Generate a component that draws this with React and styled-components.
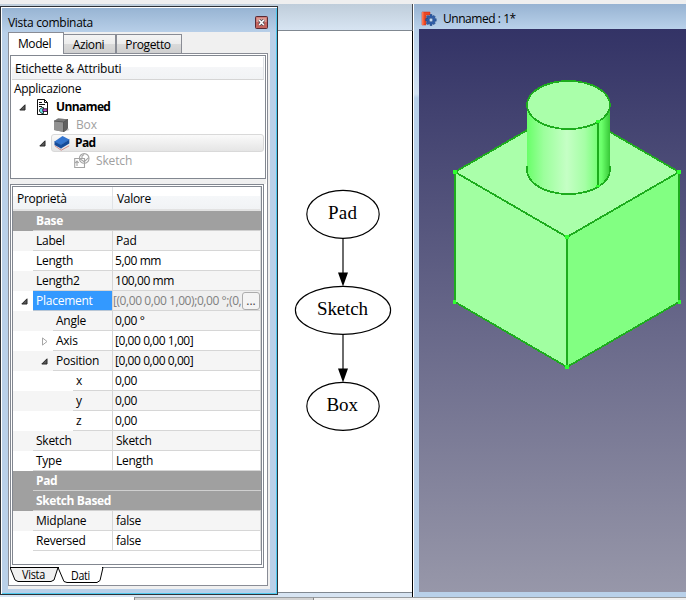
import React from "react";
import styled, { createGlobalStyle, css } from "styled-components";

const Global = createGlobalStyle`
  * { box-sizing: border-box; }
  body { margin: 0; overflow: hidden; }
`;

const Screen = styled.div`
  width: 686px;
  height: 600px;
  display: grid;
  grid-template-rows: 4px 593px 3px;
  background: #efefef;
  color: #000;
  font: 12px/18px "Open Sans", "Noto Sans", sans-serif;
  letter-spacing: -0.3px;
  white-space: nowrap;
  overflow: hidden;
`;

const TopEdge = styled.div`
  background: #efefef;
`;

const Workspace = styled.div`
  display: grid;
  grid-template-columns: 278px 136px 272px;
  background: #d7e4f2;
`;

const DockColumn = styled.div`
  padding-top: 2px;
  background: linear-gradient(#bfcdda, #c3d1de 2px, #d7e4f2 3px);
`;

const Dock = styled.section`
  height: 589px;
  padding: 0 7px 5px 6px;
  display: flex;
  flex-direction: column;
  border: 1px solid #2e3237;
  background: linear-gradient(#96b3d2, #b9d0e9 26px, #b9d0e9);
  box-shadow: inset 1px 1px #fff, inset -1px -1px #4ec9ef;
`;

const DockTitle = styled.header`
  height: 25px;
  padding: 6px 2px 0 1px;
  display: flex;
  justify-content: space-between;
  line-height: 20px;
`;

const CloseIcon = styled.svg`
  width: 13px;
  height: 13px;
  margin-top: 3px;
`;

const DockBody = styled.div`
  flex: 1;
  width: 262px;
  margin-left: 1px;
  background: #f0f0f0;
`;

const TabRow = styled.div`
  height: 21px;
  display: flex;
  align-items: flex-end;
`;

const Tab = styled.div`
  width: ${(p) => p.$width}px;
  height: ${(p) => (p.$active ? 22 : 19)}px;
  margin-bottom: ${(p) => (p.$active ? -1 : 0)}px;
  border: 1px solid #898c95;
  border-bottom: 0;
  margin-right: ${(p) => (p.$active ? -1 : 0)}px;
  padding-right: ${(p) => (p.$active ? 3 : 2)}px;
  text-align: center;
  line-height: ${(p) => (p.$active ? 21 : 19)}px;
  background: ${(p) => (p.$active ? "#fff" : "linear-gradient(#f4f4f4, #ececec 50%, #dadada 51%, #cfcfcf)")};
  z-index: ${(p) => (p.$active ? 1 : 0)};
  letter-spacing: -0.38px;
`;

const TabPage = styled.div`
  width: 260px;
  height: 533px;
  padding: 1px;
  border: 1px solid #898c95;
  background: #fff;
`;

const TreeFrame = styled.div`
  width: 256px;
  height: 124px;
  padding: 1px;
  border: 1px solid #828790;
  background: #fff;
`;

const TreeHeader = styled.div`
  height: 23px;
  padding-left: 3px;
  line-height: 23px;
  letter-spacing: -0.18px;
  border-bottom: 1px solid #d5d5d5;
  border-right: 1px solid #dfe2e6;
  background: linear-gradient(#fff 45%, #f5f6f8 46%, #f1f3f5);
`;

const TreeRow = styled.div`
  height: 18px;
  padding-left: ${(p) => p.$indent}px;
  display: flex;
  align-items: center;
  font-weight: ${(p) => (p.$bold ? 700 : 400)};
  letter-spacing: ${(p) => (p.$bold ? -0.6 : p.$muted ? -0.15 : -0.3)}px;
  color: ${(p) => (p.$muted ? "#a0a0a0" : "#000")};
`;

const TreeLabel = styled.div`
  height: 18px;
  display: flex;
  align-items: center;
  gap: ${(p) => (p.$tight ? 4 : 6)}px;
  flex: 1;
  padding-left: ${(p) => (p.$selected ? 2 : 3)}px;
  ${(p) =>
    p.$selected &&
    css`
      border: 1px solid #d9d9d9;
      border-radius: 3px;
      gap: 5px;
      background: linear-gradient(#fafafa, #e5e5e5);
    `}
`;

const Branch = styled.svg`
  width: ${(p) => p.$width ?? 7}px;
  height: ${(p) => p.$height ?? 7}px;
  flex: none;
  margin-right: ${(p) => p.$gap}px;
`;

const Icon = styled.svg`
  width: 16px;
  height: 16px;
  flex: none;
`;

const Splitter = styled.div`
  width: 256px;
  height: 5px;
  background: #f0f0f0;
`;

const PropertyFrame = styled.div`
  width: 254px;
  height: 384px;
  padding: 1px;
  border: 1px solid #828790;
  background: #fff;
`;

const PropertyView = styled.div`
  width: 250px;
  height: 379px;
  border: 1px solid #828790;
`;

const PropertyHeader = styled.div`
  width: 248px;
  height: 24px;
  display: grid;
  grid-template-columns: 100px 1fr;
  line-height: 24px;
  letter-spacing: -0.3px;
  border-bottom: 2px solid #e2e2e2;
  background: linear-gradient(#fff 42%, #f5f7f9 43%, #f1f3f5);
`;

const HeaderCell = styled.div`
  padding-left: 4px;
  border-right: 1px solid #e0e3e6;
`;

const PropertyRow = styled.div`
  width: 248px;
  height: 20px;
  display: grid;
  grid-template-columns: ${(p) => p.$indent}px ${(p) => 99 - p.$indent}px 1fr;
  background: ${(p) => (p.$shade ? "#f5f5f5" : "#fff")};
`;

const BranchCell = styled.div`
  padding-right: 5px;
  display: flex;
  align-items: center;
  justify-content: flex-end;
`;

const NameCell = styled.div`
  padding-left: 3px;
  line-height: 19px;
  letter-spacing: -0.25px;
  border-bottom: 1px solid #d6d6d6;
  ${(p) =>
    p.$selected &&
    css`
      background: #3399ff;
      border-color: #b9c7d6;
      color: #fff;
    `}
`;

const ValueCell = styled.div`
  display: flex;
  padding-left: ${(p) => (p.$editing ? 0 : p.$numeric ? 2 : 3)}px;
  line-height: 19px;
  border: solid #d6d6d6;
  border-width: 0 1px 1px;
  letter-spacing: ${(p) => (p.$numeric ? -0.43 : -0.25)}px;
  color: ${(p) => (p.$editing ? "#808080" : "#000")};
  background: ${(p) => (p.$editing ? "#efefef" : "transparent")};
`;

const EditedValue = styled.span`
  flex: 1;
  letter-spacing: -0.42px;
`;

const MoreButton = styled.button`
  width: 18px;
  height: 18px;
  padding: 0;
  flex: none;
  margin-top: 1px;
  border: 1px solid #acacac;
  border-radius: 3px;
  background: #f4f4f4;
  color: #444;
  font: 12px/12px "Open Sans", sans-serif;
`;

const GroupRow = styled.div`
  width: 248px;
  height: 20px;
  padding-left: 20px;
  background: #a0a0a0;
  color: #fff;
  font-weight: 700;
  letter-spacing: -0.38px;
`;

const GroupName = styled.div`
  height: 20px;
  padding-left: 3px;
  line-height: 19px;
  border-bottom: 1px solid #d0d0d0;
`;

const BottomTabs = styled.svg`
  display: block;
  width: 100px;
  height: 16px;
  margin-top: -1px;
  font: 12px "Open Sans", sans-serif;
`;

const GraphPane = styled.section`
  display: flex;
  flex-direction: column;
  border-right: 1px solid #fff;
`;

const GraphTitle = styled.div`
  height: 27px;
  background: linear-gradient(#bfcdda, #d7e4f2);
  border-right: 1px solid #44484d;
  border-bottom: 1px solid #808891;
`;

const GraphBody = styled.div`
  height: 566px;
  border-right: 1px solid #000;
  background: linear-gradient(#fff 561px, #808891 561px 562px, #d7e4f2 562px);
`;

const GraphDrawing = styled.svg`
  display: block;
  width: 134px;
  height: 561px;
  font: 19px "Liberation Serif", serif;
  letter-spacing: 0;
`;

const ViewWindow = styled.section`
  padding: 0 0 5px 5px;
  background: linear-gradient(#97b3d2, #b9d1ea 25px, #d3e2f2 90px, #b9d1ea 94px);
`;

const ViewTitle = styled.header`
  height: 25px;
  padding: 4px 0 0 2px;
  display: flex;
  align-items: center;
  gap: 6px;
  letter-spacing: -0.45px;
`;

const Viewport = styled.svg`
  display: block;
  width: 267px;
  height: 563px;
  background: linear-gradient(#333366, #9797a9);
`;

const StatusBar = styled.footer`
  display: grid;
  grid-template-columns: 134px 179px 373px;
`;

const StatusPart = styled.div`
  border-top: 1px solid ${(p) => (p.$plain ? "#fff" : "#999da1")};
  border-left: ${(p) => (p.$plain ? 0 : 1)}px solid #888;
  background: ${(p) => p.$color};
`;

function OpenBranch({ gap = 0 }) {
  return (
    <Branch $gap={gap} viewBox="0 0 7 7">
      <path d="M6 .8V6H.8z" fill="#595959" stroke="#262626" />
    </Branch>
  );
}

function ClosedBranch() {
  return (
    <Branch $gap={0} $width={6} $height={9} viewBox="0 0 6 9">
      <path d="M.5.9v7.2L5 4.5z" fill="#fff" stroke="#a6a6a6" />
    </Branch>
  );
}

function DocumentIcon() {
  return (
    <Icon viewBox="0 0 16 16">
      <path d="M1.5.5h7l3 3v12h-10z" fill="#fff" stroke="#111" />
      <path d="M8.5.5v3h3M3 3.5h3M3 5.5h6M3 7.5h3" fill="none" stroke="#111" />
      <path d="M7.5 8.5H6L3.5 10.5v2l2.5 2h1.5z" fill="#69e4ea" stroke="#111" strokeWidth=".8" />
      <path d="M6.8 9.8h4.4v2.7H6.8z" fill="#c44bd0" stroke="#111" strokeWidth=".8" />
    </Icon>
  );
}

function BoxIcon() {
  return (
    <Icon viewBox="0 0 16 16">
      <path d="M0 4l4-2.5 10 .8v10L10 15l-10-2z" fill="#858585" />
      <path d="M0 4l9.5 1v10L0 13z" fill="#929292" />
      <path d="M9.5 5L14 2.3v10L9.5 15z" fill="#606060" />
      <path d="M0 4l4-2.5 10 .8L9.5 5z" fill="#797979" />
      <path d="M0 4l9.5 1v10M9.5 5L14 2.3" fill="none" stroke="#505050" strokeWidth=".8" />
      <path d="M14 11l1.5 2-3 1z" fill="#ccc" />
    </Icon>
  );
}

function PadIcon() {
  return (
    <Icon viewBox="0 0 16 16">
      <path d="M.8 10.8l6.4 4.4 8-4.4" fill="none" stroke="#d08a88" />
      <path d="M.5 6.5L7 9.8V13.5L.5 10zM7 9.8L15.3 4.5v4L7 13.5z" fill="#164b99" />
      <path d="M.5 6.5L8.5 1 15.3 4.5 7 9.8z" fill="#3475cf" />
      <path d="M.5 6.5L7 9.8 15.3 4.5M7 9.8v3.7" fill="none" stroke="#205aac" strokeWidth=".7" />
    </Icon>
  );
}

function SketchIcon() {
  return (
    <Icon viewBox="0 0 16 16">
      <g fill="none" stroke="#a4a4a4" strokeWidth="1.1">
        <path d="M.7 5.5h9.8v9H.7zM3 13V8M1.2 10L3 8l1.8 2" />
        <circle cx="10.2" cy="5.4" r="4.8" />
        <path d="M5.5 5.5l4.7 3.2 4.5-4M8 5.5V3l2-1.5" />
      </g>
    </Icon>
  );
}

function FreeCadIcon() {
  return (
    <Icon viewBox="0 0 16 16">
      <path d="M1 1h8v3H5v3h3v3H5v4H1z" fill="#ec4824" stroke="#c92b14" strokeWidth=".5" />
      <path d="M1 1h1.5v13H1z" fill="#ff7650" />
      <path d="M9 3.5h2v2l2-1 1.2 1.2-1 2h2v2.5h-2l1 2-1.2 1.3-2-1v2H9v-2l-2.5 1-1.2-1.2 1.2-2.2H4.7V7.6h1.8L5.5 5.7l1.2-1.2L9 5.5z" fill="#315fa9" stroke="#133b78" strokeWidth=".5" />
      <circle cx="10" cy="9" r="1.9" fill="#c6d9ef" stroke="#193e77" strokeWidth=".5" />
    </Icon>
  );
}

const rows = [
  { group: "Base" },
  { name: "Label", value: "Pad", shade: true },
  { name: "Length", value: "5,00 mm" },
  { name: "Length2", value: "100,00 mm", shade: true },
  { name: "Placement", value: "[(0,00 0,00 1,00);0,00 °;(0,", editing: true, branch: "open" },
  { name: "Angle", value: "0,00 °", indent: 40, shade: true },
  { name: "Axis", value: "[0,00 0,00 1,00]", indent: 40, branch: "closed" },
  { name: "Position", value: "[0,00 0,00 0,00]", indent: 40, shade: true, branch: "open" },
  { name: "x", value: "0,00", indent: 60 },
  { name: "y", value: "0,00", indent: 60, shade: true },
  { name: "z", value: "0,00", indent: 60 },
  { name: "Sketch", value: "Sketch", shade: true },
  { name: "Type", value: "Length" },
  { group: "Pad" },
  { group: "Sketch Based" },
  { name: "Midplane", value: "false", shade: true },
  { name: "Reversed", value: "false" },
];

function Property({ row }) {
  if (row.group) {
    return <GroupRow><GroupName>{row.group}</GroupName></GroupRow>;
  }
  return (
    <PropertyRow $indent={row.indent ?? 20} $shade={row.shade}>
      <BranchCell>
        {row.branch === "open" && <OpenBranch />}
        {row.branch === "closed" && <ClosedBranch />}
      </BranchCell>
      <NameCell $selected={row.editing}>{row.name}</NameCell>
      <ValueCell $editing={row.editing} $numeric={/\d/.test(row.value)}>
        {row.editing ? <><EditedValue>{row.value}</EditedValue><MoreButton>...</MoreButton></> : row.value}
      </ValueCell>
    </PropertyRow>
  );
}

function CombinedView() {
  return (
    <Dock>
      <DockTitle>
        <span>Vista combinata</span>
        <CloseIcon viewBox="0 0 13 13">
          <rect x=".5" y=".5" width="12" height="12" rx="1" fill="#c4645e" stroke="#582a35" />
          <path d="M1.5 1.5h10V6h-10z" fill="#dc9b94" />
          <path d="M4.2 4l4.6 5M8.8 4L4.2 9" stroke="#454955" strokeWidth="3" />
          <path d="M4.2 4l4.6 5M8.8 4L4.2 9" stroke="#fff" strokeWidth="1.6" />
        </CloseIcon>
      </DockTitle>
      <DockBody>
        <TabRow>
          <Tab $width={56} $active>Model</Tab>
          <Tab $width={53}>Azioni</Tab>
          <Tab $width={66}>Progetto</Tab>
        </TabRow>
        <TabPage>
          <TreeFrame>
            <TreeHeader>Etichette &amp; Attributi</TreeHeader>
            <TreeRow $indent={2}>Applicazione</TreeRow>
            <TreeRow $indent={7} $bold>
              <OpenBranch gap={7} /><TreeLabel $tight><DocumentIcon />Unnamed</TreeLabel>
            </TreeRow>
            <TreeRow $indent={39} $muted><TreeLabel><BoxIcon />Box</TreeLabel></TreeRow>
            <TreeRow $indent={27} $bold>
              <OpenBranch gap={5} /><TreeLabel $selected><PadIcon />Pad</TreeLabel>
            </TreeRow>
            <TreeRow $indent={59} $muted><TreeLabel><SketchIcon />Sketch</TreeLabel></TreeRow>
          </TreeFrame>
          <Splitter />
          <PropertyFrame>
            <PropertyView>
              <PropertyHeader>
                <HeaderCell>Proprietà</HeaderCell><HeaderCell>Valore</HeaderCell>
              </PropertyHeader>
              {rows.map((row) => <Property key={row.group ? `group-${row.group}` : row.name} row={row} />)}
            </PropertyView>
          </PropertyFrame>
          <BottomTabs viewBox="0 0 100 16">
            <path d="M0 0.5L5 13l3 1.5h33l3-1.5L48 .5z" fill="#f0f0f0" stroke="#000" />
            <path d="M48 .5l6 14 3 1h30l3-2 3-13z" fill="#fff" stroke="#000" />
            <path d="M49 .5h43" stroke="#fff" />
            <text x="12" y="12" textLength="23" lengthAdjust="spacingAndGlyphs">Vista</text>
            <text x="61" y="13" textLength="19" lengthAdjust="spacingAndGlyphs">Dati</text>
          </BottomTabs>
        </TabPage>
      </DockBody>
    </Dock>
  );
}

function DependencyGraph() {
  return (
    <GraphDrawing viewBox="278 31 134 561">
      <g fill="none" stroke="#000" strokeWidth="1.15">
        <ellipse cx="343" cy="214.3" rx="36.2" ry="24" />
        <ellipse cx="343" cy="310.3" rx="47.6" ry="24" />
        <ellipse cx="343" cy="406.3" rx="36.2" ry="24" />
        <path d="M343 238v35M343 334v35" />
      </g>
      <path d="M338 272.5h10l-5 14zM338 368.5h10l-5 14z" />
      <text x="328" y="219" textLength="29">Pad</text>
      <text x="317" y="315" textLength="51">Sketch</text>
      <text x="326.5" y="411" textLength="31.5">Box</text>
    </GraphDrawing>
  );
}

function SolidModel() {
  return (
    <Viewport viewBox="419 29 267 563">
      <defs>
        <linearGradient id="barrel">
          <stop offset="0" stopColor="#69ff69" />
          <stop offset=".2" stopColor="#9cff9c" />
          <stop offset=".48" stopColor="#c5ffc5" />
          <stop offset=".7" stopColor="#a5ffa5" />
          <stop offset=".9" stopColor="#6aff6a" />
          <stop offset="1" stopColor="#38c838" />
        </linearGradient>
      </defs>
      <g shapeRendering="crispEdges" stroke="#1dac1d" strokeWidth="1.8">
        <path d="M455 172l112-65 112 65-112 65z" fill="#aaffaa" />
        <path d="M455 172l112 65v130l-112-65z" fill="#a1ffa1" />
        <path d="M679 172l-112 65v130l112-65z" fill="#82ff82" />
        <path d="M527 105v65a41.5 24 0 0 0 83 0v-65z" fill="url(#barrel)" stroke="none" />
        <path d="M527 166v4a41.5 24 0 0 0 83 0v-4" fill="none" />
        <ellipse cx="568.5" cy="105" rx="41.5" ry="24" fill="#aaffaa" />
        <path d="M598 122v64" />
      </g>
      <g fill="#30ff30" shapeRendering="crispEdges">
        <path d="M453 170h4v4h-4zM677 170h4v4h-4zM565 235h4v4h-4zM453 300h3v4h-3zM678 300h3v4h-3zM565 365h4v4h-4zM596 120h4v3h-4zM596 185h4v2h-4z" />
      </g>
    </Viewport>
  );
}

export default function App() {
  return (
    <>
      <Global />
      <Screen>
        <TopEdge />
        <Workspace>
          <DockColumn><CombinedView /></DockColumn>
          <GraphPane><GraphTitle /><GraphBody><DependencyGraph /></GraphBody></GraphPane>
          <ViewWindow>
            <ViewTitle><FreeCadIcon />Unnamed : 1*</ViewTitle>
            <SolidModel />
          </ViewWindow>
        </Workspace>
        <StatusBar>
          <StatusPart $plain $color="#fff" />
          <StatusPart $color="#d2d2d2" />
          <StatusPart $color="#f1f1f1" />
        </StatusBar>
      </Screen>
    </>
  );
}
